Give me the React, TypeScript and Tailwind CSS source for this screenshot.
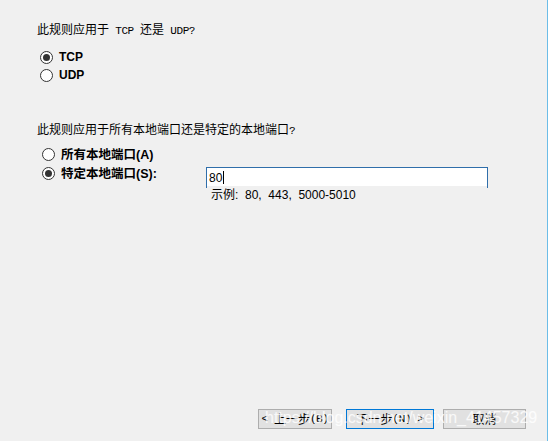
import React from "react";

const cjk = { fontFamily: '"Noto Sans CJK SC", "Liberation Sans", sans-serif' };
const mono = { fontFamily: '"Liberation Mono", "Noto Sans CJK SC", monospace' };
const sans = { fontFamily: '"Liberation Sans", "Noto Sans CJK SC", sans-serif' };

function Radio({ checked }: { checked?: boolean }) {
  return (
    <span className="w-[13px] h-[13px] rounded-full border border-[#333333] bg-white flex items-center justify-center shrink-0">
      {checked && <span className="w-[7px] h-[7px] rounded-full bg-[#333333]" />}
    </span>
  );
}

function L({ children }: { children: React.ReactNode }) {
  return (
    <span className="text-[11px] tracking-[-0.4px]" style={mono}>
      {children}
    </span>
  );
}

export default function App() {
  return (
    <div
      className="relative w-[548px] h-[441px] bg-[#f0f0f0] flex flex-col border-r border-r-[#6cbde8] text-[#000000] overflow-hidden"
      style={cjk}
    >
      <div className="pl-[37px] pt-[21px] flex flex-col">
        <p className="h-[16px] leading-[16px] text-[12px] whitespace-pre">
          此规则应用于<L> TCP </L>还是<L> UDP?</L>
        </p>
        <div className="mt-[11px] ml-[3px] flex flex-col">
          <div className="h-[18px] flex items-center gap-[6px]">
            <Radio checked />
            <span className="text-[12px] font-bold" style={sans}>TCP</span>
          </div>
          <div className="h-[18px] flex items-center gap-[6px]">
            <Radio />
            <span className="text-[12px] font-bold" style={sans}>UDP</span>
          </div>
        </div>
        <p className="mt-[37px] h-[16px] leading-[16px] text-[12px] whitespace-pre">
          此规则应用于所有本地端口还是特定的本地端口<L>?</L>
        </p>
        <div className="mt-[8px] ml-[5px] flex flex-col">
          <div className="h-[19px] flex items-center gap-[6px]">
            <Radio />
            <span className="text-[12.5px] font-bold leading-none">
              所有本地端口<span style={sans}>(A)</span>
            </span>
          </div>
          <div className="flex items-start">
            <div className="w-[164px] h-[19px] flex items-center gap-[6px]">
              <Radio checked />
              <span className="text-[12.5px] font-bold leading-none">
                特定本地端口<span style={sans}>(S):</span>
              </span>
            </div>
            <div className="mt-[3px] flex flex-col">
              <div className="w-[282px] h-[21px] bg-white border border-[#2f6eaa] flex items-center pl-[2px]">
                <span className="text-[12px] leading-none" style={sans}>80</span>
                <span className="w-[1px] h-[13px] bg-black ml-[1px]" />
              </div>
              <div
                className="relative -mt-[2px] ml-[1px] w-[280px] h-[15px] bg-[#f0f0f0] pl-[4px] text-[12px] leading-[15px] text-[#000000] whitespace-pre"
                style={sans}
              >
                <span style={cjk}>示例</span>:  80,  443,  5000-5010
              </div>
            </div>
          </div>
        </div>
      </div>

      <div className="flex-1" />

      <div className="flex justify-end items-center pr-[21px] pb-[12px] text-[12px]">
        <button className="w-[74px] h-[20px] bg-[#e1e1e1] border border-[#adadad] flex items-center justify-center leading-none whitespace-pre">
          <L>&lt; </L>上一步<L>(B)</L>
        </button>
        <button className="ml-[14px] w-[88px] h-[20px] bg-[#e1e1e1] border border-[#0078d7] flex items-center justify-center leading-none whitespace-pre">
          下一步<L>(N) &gt;</L>
        </button>
        <button className="ml-[9px] w-[83px] h-[20px] bg-[#e1e1e1] border border-[#adadad] flex items-center justify-center leading-none">
          取消
        </button>
      </div>

      <div
        className="absolute left-[265px] top-[407px] text-[16px] leading-[22px] text-white/80 whitespace-nowrap pointer-events-none"
        style={sans}
      >
        https://blog.csdn.net/weixin_41457329
      </div>
    </div>
  );
}
